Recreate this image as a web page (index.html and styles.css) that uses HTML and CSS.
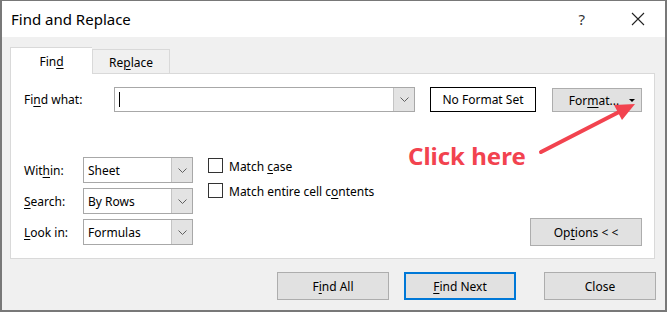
FILE: index.html
```html
<!DOCTYPE html>
<html lang="en">
<head>
    <meta charset="UTF-8">
    <title>Find and Replace</title>
    <link rel="stylesheet" href="styles.css">
</head>
<body>
    <div class="window">
        <div class="titlebar">
            <span class="title">Find and Replace</span>
            <span class="help">?</span>
            <span class="close">
                <svg width="14" height="14" viewBox="0 0 14 14"><path d="M1 1 L13 13 M13 1 L1 13" stroke="#222" stroke-width="1.1" fill="none"/></svg>
            </span>
        </div>

        <div class="body">
            <div class="tabs">
                <div class="tab active">Fin<u>d</u></div>
                <div class="tab">Re<u>p</u>lace</div>
            </div>

            <div class="panel">
                <div class="find-row">
                    <label class="find-label">Fi<u>n</u>d what:</label>
                    <div class="combo combo-wide">
                        <span class="field"><span class="caret"></span></span>
                        <span class="drop"><svg width="9" height="5" viewBox="0 0 9 5"><path d="M0.5 0.5 L4.5 4.5 L8.5 0.5" stroke="#606060" fill="none"/></svg></span>
                    </div>
                    <div class="no-format">No Format Set</div>
                    <button class="btn btn-format">For<u>m</u>at... <span class="tri"></span></button>
                </div>

                <div class="opts">
                    <div class="selects">
                        <label>Wit<u>h</u>in:</label>
                        <div class="combo">
                            <span class="field">Sheet</span>
                            <span class="drop"><svg width="9" height="5" viewBox="0 0 9 5"><path d="M0.5 0.5 L4.5 4.5 L8.5 0.5" stroke="#606060" fill="none"/></svg></span>
                        </div>
                        <label><u>S</u>earch:</label>
                        <div class="combo">
                            <span class="field">By Rows</span>
                            <span class="drop"><svg width="9" height="5" viewBox="0 0 9 5"><path d="M0.5 0.5 L4.5 4.5 L8.5 0.5" stroke="#606060" fill="none"/></svg></span>
                        </div>
                        <label><u>L</u>ook in:</label>
                        <div class="combo">
                            <span class="field">Formulas</span>
                            <span class="drop"><svg width="9" height="5" viewBox="0 0 9 5"><path d="M0.5 0.5 L4.5 4.5 L8.5 0.5" stroke="#606060" fill="none"/></svg></span>
                        </div>
                    </div>

                    <div class="checks">
                        <div class="check"><span class="box"></span><span>Match <u>c</u>ase</span></div>
                        <div class="check"><span class="box"></span><span>Match entire cell c<u>o</u>ntents</span></div>
                    </div>

                    <button class="btn btn-options">Op<u>t</u>ions &lt; &lt;</button>
                </div>
            </div>

            <div class="actions">
                <button class="btn">F<u>i</u>nd All</button>
                <button class="btn btn-default"><u>F</u>ind Next</button>
                <button class="btn btn-close">Close</button>
            </div>
        </div>

        <div class="note">Click here</div>
        <svg class="arrow" width="667" height="312" viewBox="0 0 667 312">
            <line x1="541" y1="152" x2="619" y2="112" stroke="#f2434f" stroke-width="4" stroke-linecap="round"/>
            <polygon points="635,104 614,105 622,120" fill="#f2434f"/>
        </svg>
    </div>
</body>
</html>
```

FILE: styles.css
```css
body {
    margin: 0;
    font-family: "Noto Sans", "Open Sans", sans-serif;
    font-size: 12px;
    color: #000;
}
u {
    text-decoration-thickness: 1px;
    text-underline-offset: 2px;
}
.window {
    position: relative;
    width: 667px;
    height: 312px;
    box-sizing: border-box;
    border: 2px solid #787878;
    border-top-width: 1px;
    background-color: #f0f0f0;
    overflow: hidden;
}
.titlebar {
    height: 36px;
    background-color: white;
    display: flex;
    align-items: center;
    padding-left: 9px;
}
.title {
    font-size: 15px;
    flex: 1;
}
.help {
    font-size: 15px;
    color: #333;
    margin-right: 46px;
}
.close {
    display: flex;
    margin-right: 20px;
}
.body {
    padding: 10px 10px 0 8px;
}
.tabs {
    display: flex;
    align-items: flex-end;
    height: 26px;
}
.tab {
    box-sizing: border-box;
    width: 78px;
    height: 24px;
    border: 1px solid #d9d9d9;
    border-bottom: none;
    background-color: #f0f0f0;
    text-align: center;
    line-height: 26px;
}
.tab.active {
    width: 82px;
    height: 27px;
    background-color: white;
    line-height: 28px;
    margin-bottom: -1px;
    position: relative;
    z-index: 1;
    border-right: none;
}
.panel {
    border: 1px solid #d9d9d9;
    background-color: white;
    padding: 13px 12px 13px 13px;
}
.find-row {
    display: flex;
    align-items: center;
    height: 25px;
}
.find-label {
    width: 90px;
}
.combo {
    display: flex;
    box-sizing: border-box;
    height: 26px;
    border: 1px solid #a8a8a8;
    background-color: white;
}
.combo-wide {
    width: 301px;
    height: 25px;
}
.field {
    flex: 1;
    display: flex;
    align-items: center;
    padding-left: 4px;
}
.caret {
    width: 1px;
    height: 15px;
    background-color: black;
}
.drop {
    width: 20px;
    display: flex;
    align-items: center;
    justify-content: center;
    background-color: #e3e3e3;
    border-left: 1px solid #c4c4c4;
}
.no-format {
    box-sizing: border-box;
    width: 106px;
    height: 25px;
    margin-left: 15px;
    border: 1px solid black;
    text-align: center;
    line-height: 23px;
}
.btn {
    box-sizing: border-box;
    font-family: inherit;
    font-size: 12px;
    color: black;
    background-color: #e1e1e1;
    border: 1px solid #adadad;
    padding: 0;
    width: 112px;
    height: 28px;
}
.btn-format {
    width: 90px;
    height: 24px;
    margin-left: 16px;
    margin-top: 1px;
    position: relative;
    padding-right: 6px;
}
.tri {
    position: absolute;
    right: 6px;
    top: 10px;
    border-left: 3px solid transparent;
    border-right: 3px solid transparent;
    border-top: 3px solid black;
}
.opts {
    display: flex;
    margin-top: 45px;
}
.selects {
    display: grid;
    grid-template-columns: 59px 110px;
    row-gap: 5px;
    align-items: center;
}
.checks {
    margin-left: 15px;
    margin-top: 1px;
    display: flex;
    flex-direction: column;
    gap: 10px;
}
.check {
    display: flex;
    align-items: center;
    gap: 6px;
    height: 15px;
}
.check span:last-child {
    padding-top: 2px;
}
.box {
    box-sizing: border-box;
    width: 15px;
    height: 15px;
    border: 1px solid #333;
}
.btn-options {
    margin-left: auto;
    align-self: flex-end;
    margin-bottom: -1px;
}
.actions {
    display: flex;
    justify-content: flex-end;
    gap: 15px;
    margin-top: 13px;
    margin-right: -1px;
}
.btn-default {
    border: 2px solid #0078d7;
}
.btn-close {
    margin-left: 13px;
}
.note {
    position: absolute;
    left: 406px;
    top: 138px;
    font-size: 24px;
    font-weight: bold;
    color: #f2434f;
}
.arrow {
    position: absolute;
    left: -2px;
    top: -1px;
    pointer-events: none;
}
```
